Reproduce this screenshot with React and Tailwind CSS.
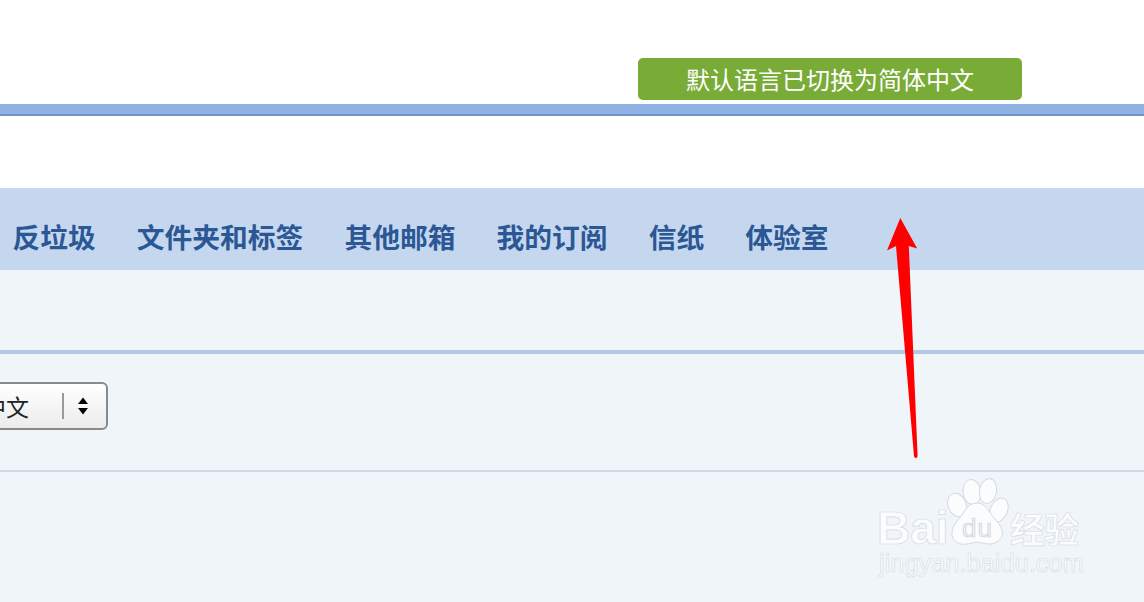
const cjk = { fontFamily: '"Noto Sans CJK SC", "Liberation Sans", sans-serif' };

const tabs = ["反垃圾", "文件夹和标签", "其他邮箱", "我的订阅", "信纸", "体验室"];

function Arrow() {
  return (
    <svg className="absolute left-[880px] top-[212px]" width="44" height="250" viewBox="880 212 44 250">
      <path
        d="M900.3 218 L917.2 248.6 L908.8 246 L917.6 456 Q917.6 458 915.8 458 Q914.2 458 914 456 L896 246 L887 250.6 Z"
        fill="#ff0000"
      />
    </svg>
  );
}

function Watermark() {
  return (
    <div className="absolute left-[876px] top-[478px] w-[210px] h-[100px] select-none" style={cjk}>
      <svg className="absolute left-0 top-0" width="210" height="80" viewBox="0 0 210 80">
        <g fill="#fbfcfe" stroke="#d3d9e1" strokeWidth="1">
          <ellipse cx="81" cy="27" rx="9" ry="12" transform="rotate(-22 81 27)" />
          <ellipse cx="96" cy="14" rx="9" ry="12.5" transform="rotate(-8 96 14)" />
          <ellipse cx="112" cy="13" rx="8.5" ry="12.5" transform="rotate(10 112 13)" />
          <ellipse cx="123" cy="32" rx="8.5" ry="12.5" transform="rotate(22 123 32)" />
          <path d="M101 25 C110 25 112 33 119 41 C127 50 130 58 121 64 C114 68 108 65 101 64 C94 65 88 68 82 65 C73 60 75 50 82 42 C89 34 91 25 101 25 Z" />
        </g>
      </svg>
      <span
        className="absolute left-[1px] top-[22px] text-[46px] leading-[56px] font-bold text-[#fbfcfe]"
        style={{ fontFamily: '"Liberation Sans", sans-serif', WebkitTextStroke: "0.7px #d3d9e1" }}
      >
        Bai
      </span>
      <span
        className="absolute left-[86px] top-[37px] text-[26px] leading-[26px] text-[#f0f3f6] tracking-[1px]"
        style={{ fontFamily: '"Liberation Sans", sans-serif', WebkitTextStroke: "0.6px #c4cbd5" }}
      >
        du
      </span>
      <span
        className="absolute left-[134px] top-[28px] text-[35px] leading-[44px] font-bold text-[#fbfcfe] tracking-[-1px] whitespace-nowrap"
        style={{ WebkitTextStroke: "0.6px #d3d9e1" }}
      >
        经验
      </span>
      <span
        className="absolute left-[3px] top-[71px] text-[25.4px] leading-[28px] text-[#fbfcfe] whitespace-nowrap"
        style={{ fontFamily: '"Liberation Sans", sans-serif', WebkitTextStroke: "0.6px #d3d9e1" }}
      >
        jingyan.baidu.com
      </span>
    </div>
  );
}

export default function App() {
  return (
    <div className="relative w-[1144px] h-[602px] overflow-hidden bg-white" style={cjk}>
      <div className="flex h-[104px] justify-end pt-[58px] pr-[122px] bg-white">
        <div className="flex h-[42px] w-[384px] items-center justify-center rounded-[5px] bg-[#79ac36] text-[24px] leading-[42px] text-white">
          默认语言已切换为简体中文
        </div>
      </div>
      <div className="h-[12px] bg-[#8fb2e2] border-b-2 border-[#7094c5]" />
      <div className="h-[72px] bg-white" />
      <nav className="flex h-[82px] items-center gap-[41.1px] pl-[12.5px] pt-[14px] bg-[#c5d7ef] text-[27.75px] leading-[36px] font-bold text-[#2c5795]">
        {tabs.map((t) => (
          <span key={t} className="whitespace-nowrap">
            {t}
          </span>
        ))}
      </nav>
      <main className="h-[332px] bg-[#f0f5fa]">
        <div className="h-[84px] border-b-4 border-[#b0c9e6]" />
        <div className="h-[118px] pt-[28px] border-b-2 border-[#cfdae8]">
          <div className="flex h-[48px] w-[148px] -ml-[40px] items-center rounded-[6px] border-2 border-[#8a8a8a] bg-gradient-to-b from-white to-[#ececec] text-[23px] text-[#222]">
            <span className="w-[100px] pr-[33px] text-right leading-[44px] whitespace-nowrap">中文</span>
            <span className="h-[26px] w-[2px] bg-[#9a9a9a]" />
            <svg className="ml-[13px]" width="12" height="18" viewBox="0 0 12 18">
              <path d="M6 0.5 L11 7 L1 7 Z M1 11 L11 11 L6 17.5 Z" fill="#000" />
            </svg>
          </div>
        </div>
      </main>
      <Arrow />
      <Watermark />
    </div>
  );
}
